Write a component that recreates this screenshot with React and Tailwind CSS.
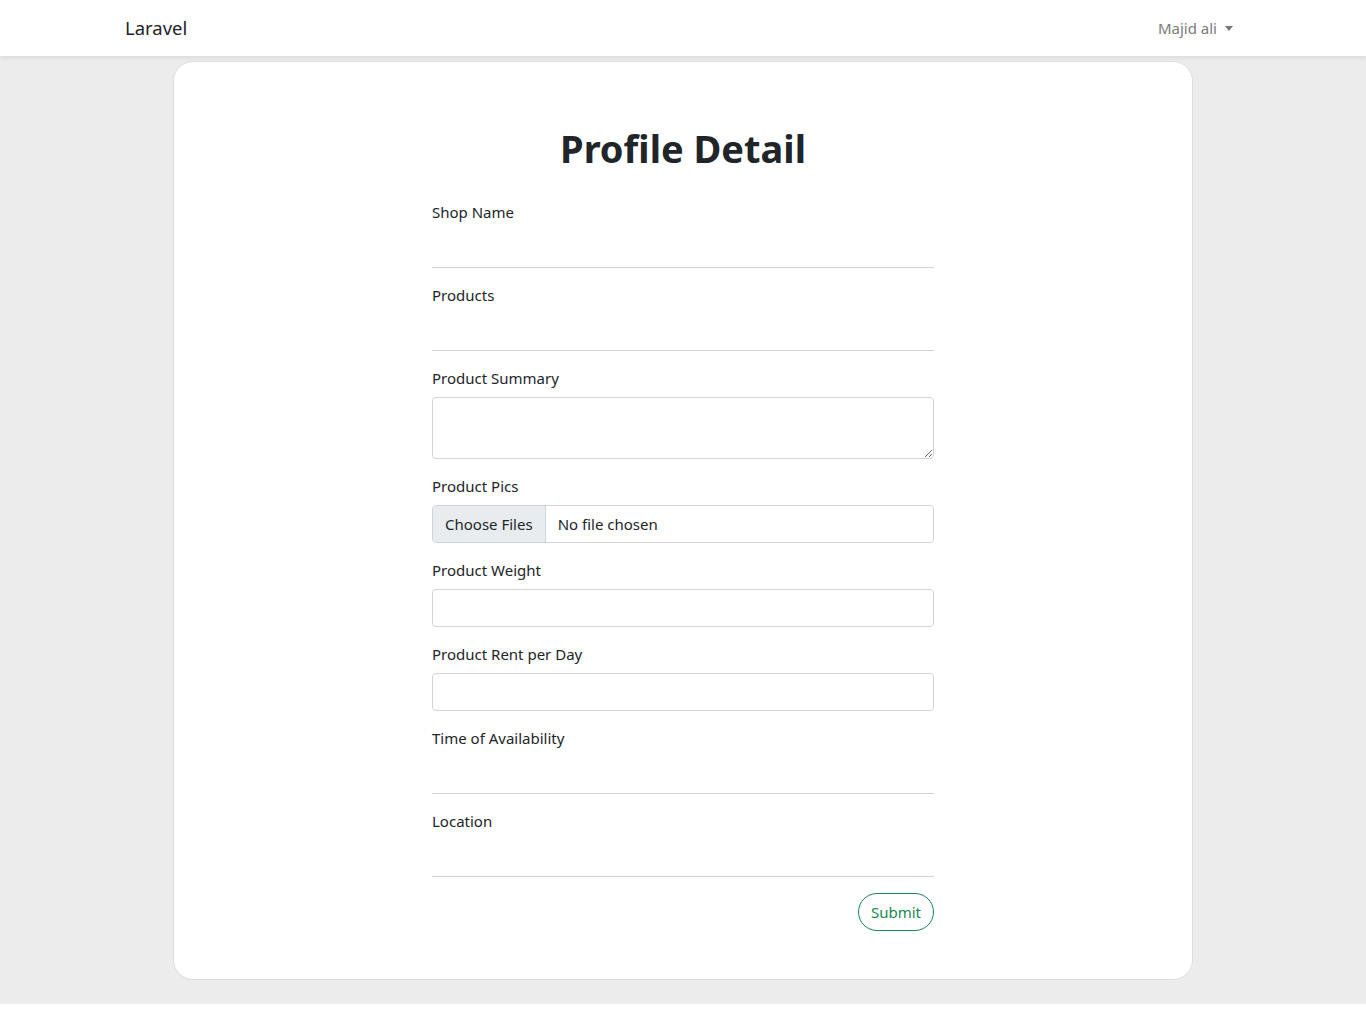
import React from 'react'

const font = { fontFamily: '"Noto Sans", "Open Sans", sans-serif' }

const labelCls = 'block mb-2 text-[15px] leading-[22px] text-[#212529]'

const UnderlineField = ({ label }) => (
    <div className="mb-4">
        <label className={labelCls}>{label}</label>
        <input
            type="text"
            className="block w-full h-[37px] border-0 border-b border-[#ced4da] outline-none bg-transparent px-0"
        />
    </div>
)

const BoxField = ({ label }) => (
    <div className="mb-4">
        <label className={labelCls}>{label}</label>
        <input
            type="text"
            className="block w-full h-[38px] rounded border border-[#ced4da] outline-none px-3"
        />
    </div>
)

export default function App() {
    return (
        <div className="min-h-[1028px] bg-white" style={font}>
            <nav className="h-14 bg-white shadow-[0_2px_4px_rgba(0,0,0,0.075)] relative z-10">
                <div className="max-w-[1140px] mx-auto px-3 h-full flex items-center justify-between">
                    <span className="text-[18.5px] text-[#212529]">Laravel</span>
                    <span className="flex items-center gap-2 text-[15px] text-[#7a7a7a] mr-2">
                        Majid ali
                        <span className="w-0 h-0 border-l-[4px] border-r-[4px] border-t-[5px] border-l-transparent border-r-transparent border-t-[#777]" />
                    </span>
                </div>
            </nav>
            <main className="bg-[#ececec] pt-[5px] pb-6">
                <div className="w-[1020px] mx-auto bg-white border border-[#dedede] rounded-[20px] pt-[62px] pb-12">
                    <h1 className="text-center text-[38px] font-bold leading-[48px] text-[#212529] mb-[29px]">
                        Profile Detail
                    </h1>
                    <form className="w-[502px] mx-auto">
                        <UnderlineField label="Shop Name" />
                        <UnderlineField label="Products" />
                        <div className="mb-4">
                            <label className={labelCls}>Product Summary</label>
                            <textarea className="block w-full h-[62px] rounded border border-[#ced4da] outline-none px-3 py-1.5" />
                        </div>
                        <div className="mb-4">
                            <label className={labelCls}>Product Pics</label>
                            <div className="flex h-[38px] w-full rounded border border-[#ced4da] overflow-hidden text-[15px] text-[#212529]">
                                <span className="flex items-center px-3 bg-[#e9ecef] border-r border-[#ced4da]">
                                    Choose Files
                                </span>
                                <span className="flex items-center px-3">No file chosen</span>
                            </div>
                        </div>
                        <BoxField label="Product Weight" />
                        <BoxField label="Product Rent per Day" />
                        <UnderlineField label="Time of Availability" />
                        <UnderlineField label="Location" />
                        <div className="flex justify-end">
                            <button
                                type="button"
                                className="h-[38px] px-3 rounded-full border border-[#198754] text-[#198754] text-[15px] bg-white"
                            >
                                Submit
                            </button>
                        </div>
                    </form>
                </div>
            </main>
        </div>
    )
}
